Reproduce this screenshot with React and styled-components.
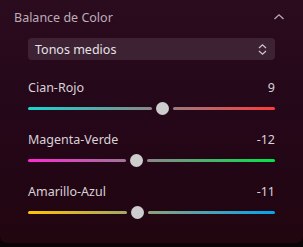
import React, { useState } from 'react';
import styled, { createGlobalStyle } from 'styled-components';

const GlobalStyle = createGlobalStyle`
  html, body {
    margin: 0;
    padding: 0;
    background: #0b0407;
  }
  body {
    font-family: 'Noto Sans', 'Open Sans', sans-serif;
  }
`;

const Panel = styled.section`
  width: 303px;
  height: 243px;
  box-sizing: border-box;
  background: linear-gradient(180deg, #2b0c1f 0%, #25071a 45%, #21050f 100%);
  border-radius: 0 0 7px 7px;
  padding: 0 17px 0 14px;
`;

const Header = styled.div`
  display: flex;
  align-items: center;
  justify-content: space-between;
  height: 34px;
  color: #bcaeb8;
  font-size: 12.5px;
`;

const Body = styled.div`
  padding: 4px 11px 0 14px;
  display: flex;
  flex-direction: column;
`;

const Select = styled.div`
  display: flex;
  align-items: center;
  justify-content: space-between;
  height: 22px;
  padding: 0 7px 0 7px;
  border-radius: 4px;
  background: rgba(255, 255, 255, 0.1);
  color: #e6e2e4;
  font-size: 12.5px;
  margin-bottom: 19px;
`;

const SliderBlock = styled.div`
  display: flex;
  flex-direction: column;
  margin-bottom: 16px;
`;

const LabelRow = styled.div`
  display: flex;
  justify-content: space-between;
  color: #d8d2d6;
  font-size: 12.5px;
  line-height: 18px;
`;

const Track = styled.div`
  display: flex;
  align-items: center;
  height: 14px;
  margin-top: 4px;
`;

const Bar = styled.div`
  height: 3px;
  border-radius: 2px;
  background: ${(p) => p.$gradient};
  background-size: 247px 3px;
  background-position: ${(p) => (p.$right ? 'right' : 'left')} center;
  flex: ${(p) => p.$grow} 1 0;
`;

const Thumb = styled.div`
  width: 13px;
  height: 13px;
  border-radius: 50%;
  background: #cdcdcd;
  margin: 0 4px;
  flex: none;
`;

const Chevron = () => (
  <svg width="12" height="8" viewBox="0 0 12 8" style={{ marginRight: 1 }}>
    <path d="M1.5 6 L6 1.8 L10.5 6" fill="none" stroke="#b8aab4" strokeWidth="1.3" />
  </svg>
);

const UpDown = () => (
  <svg width="11" height="13" viewBox="0 0 11 13">
    <path d="M2 5 L5.5 1.8 L9 5 M2 8 L5.5 11.2 L9 8" fill="none" stroke="#cfc6cb" strokeWidth="1.2" />
  </svg>
);

const Slider = ({ label, value, gradient }) => {
  const pct = (value + 100) / 200;
  const width = 247 - 21;
  const left = Math.round(pct * 247 - 10.5);
  return (
    <SliderBlock>
      <LabelRow>
        <span>{label}</span>
        <span>{value}</span>
      </LabelRow>
      <Track>
        <Bar $gradient={gradient} $grow={left} />
        <Thumb />
        <Bar $gradient={gradient} $grow={width - left} $right />
      </Track>
    </SliderBlock>
  );
};

const sliders = [
  { label: 'Cian-Rojo', value: 9, gradient: 'linear-gradient(90deg, #16d6d2 0%, #888 50%, #ff3a3a 100%)' },
  { label: 'Magenta-Verde', value: -12, gradient: 'linear-gradient(90deg, #ff2ad6 0%, #888 50%, #00e64a 100%)' },
  { label: 'Amarillo-Azul', value: -11, gradient: 'linear-gradient(90deg, #ffc400 0%, #8aa080 50%, #00a6f0 100%)' },
];

const App = () => {
  const [open] = useState(true);
  return (
    <>
      <GlobalStyle />
      <Panel>
        <Header>
          <span>Balance de Color</span>
          <Chevron />
        </Header>
        {open && (
          <Body>
            <Select>
              <span>Tonos medios</span>
              <UpDown />
            </Select>
            {sliders.map((s) => (
              <Slider key={s.label} {...s} />
            ))}
          </Body>
        )}
      </Panel>
    </>
  );
};

export default App;
